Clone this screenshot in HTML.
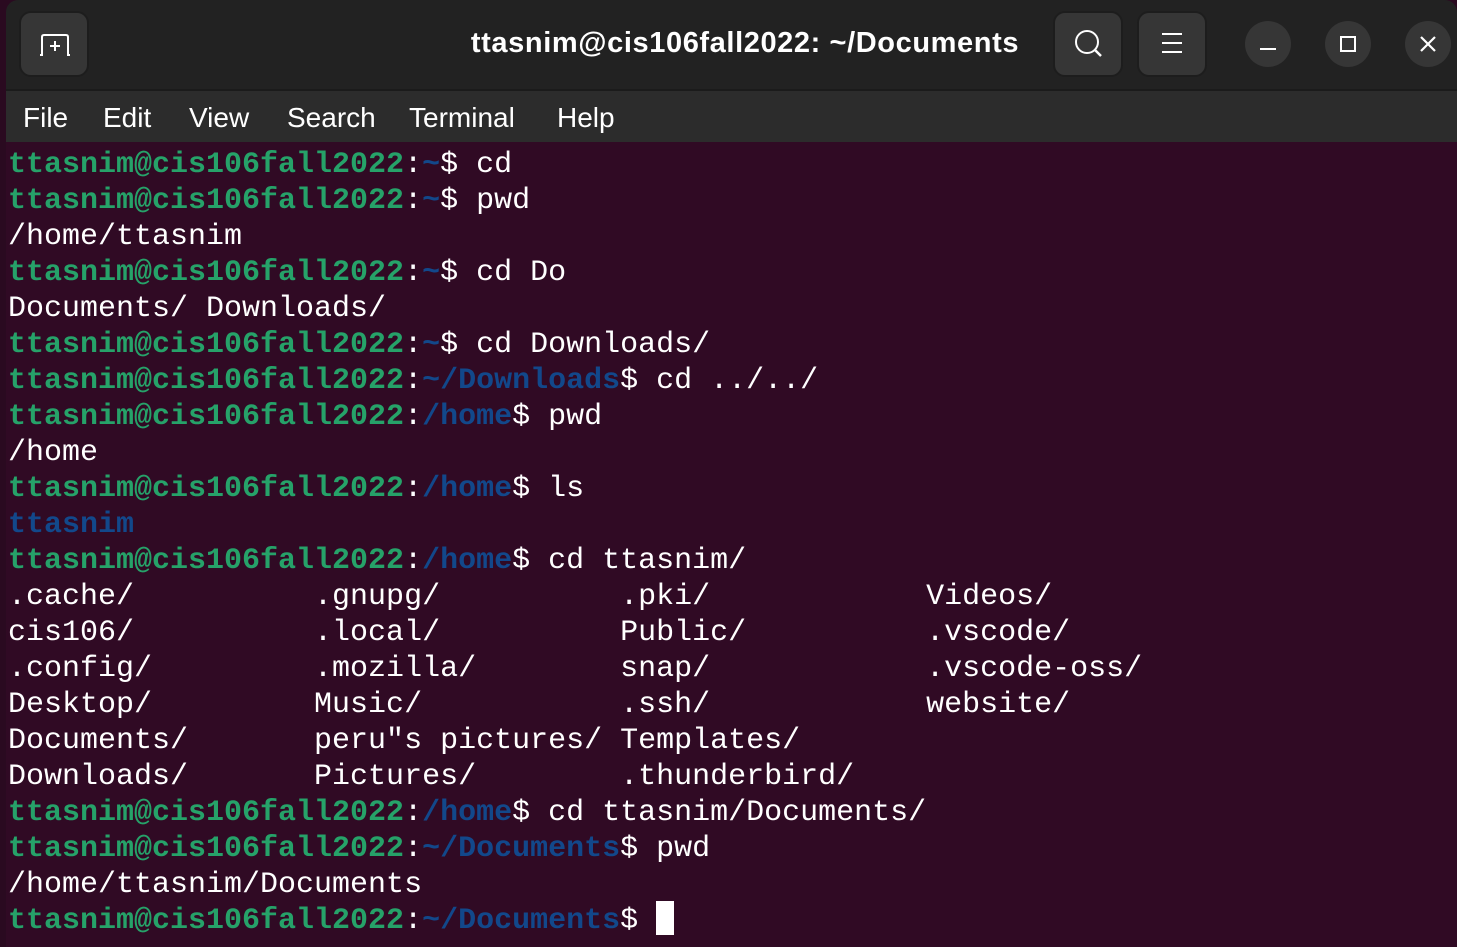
<!DOCTYPE html>
<html><head><meta charset="utf-8"><style>
*{margin:0;padding:0;box-sizing:border-box}
body{width:1457px;height:947px;background:#2a0a20;overflow:hidden;position:relative;font-family:"Liberation Sans",sans-serif}
.win{position:absolute;left:6px;top:0;width:1451px;height:947px;background:#300a24;border-radius:12px 12px 0 0;overflow:hidden}
.title{position:absolute;left:0;top:0;width:100%;height:91px;background:#222;border-bottom:2px solid #1b1b1b}
.btn{position:absolute;top:11px;width:70px;height:66px;background:#363636;border:2px solid #1d1d1d;border-radius:12px}
.circ{position:absolute;top:21px;width:46px;height:46px;border-radius:50%;background:#363636}
.ttl{position:absolute;left:0;width:1478px;top:27px;text-align:center;color:#fff;font-weight:bold;font-size:29px;letter-spacing:0.6px}
.menu{position:absolute;left:0;top:91px;width:100%;height:51px;background:#2c2c2c;color:#fff;font-size:28px}
.menu span{position:absolute;top:11px}
.term{position:absolute;left:2px;top:147px;font-family:"Liberation Mono",monospace;font-size:30px;line-height:36px;color:#fff;white-space:pre}
.g{color:#26a269;font-weight:bold}.b{color:#12488b;font-weight:bold}
.cur{display:inline-block;width:18px;height:34px;background:#fff;vertical-align:top;position:relative;top:-2px}
</style></head><body>
<div class="win">
<div class="title">
 <div class="btn" style="left:13px"><svg width="66" height="62" viewBox="0 0 66 62"><path d="M19 42h2V24q0-2 2-2h22q2 0 2 2v18h2" fill="none" stroke="#fff" stroke-width="2"/><path d="M34 28v10M29 33h10" stroke="#fff" stroke-width="2"/></svg></div>
 <div class="ttl">ttasnim@cis106fall2022: ~/Documents</div>
 <div class="btn" style="left:1047px"><svg width="70" height="66" viewBox="0 0 70 66"><circle cx="32" cy="29" r="11" fill="none" stroke="#fff" stroke-width="2"/><path d="M40 37l6 6" stroke="#fff" stroke-width="2.5"/></svg></div>
 <div class="btn" style="left:1131px"><svg width="70" height="66" viewBox="0 0 70 66"><path d="M23 21h20M23 30h20M23 39h20" stroke="#fff" stroke-width="2"/></svg></div>
 <div class="circ" style="left:1239px"><svg width="46" height="46"><path d="M15 28h16" stroke="#fff" stroke-width="2"/></svg></div>
 <div class="circ" style="left:1319px"><svg width="46" height="46"><rect x="16" y="16" width="14" height="14" fill="none" stroke="#fff" stroke-width="2"/></svg></div>
 <div class="circ" style="left:1399px"><svg width="46" height="46"><path d="M16 16l14 14M30 16L16 30" stroke="#fff" stroke-width="2.2"/></svg></div>
</div>
<div class="menu"><span style="left:17px">File</span><span style="left:97px">Edit</span><span style="left:183px">View</span><span style="left:281px">Search</span><span style="left:403px">Terminal</span><span style="left:551px">Help</span></div>
<div class="term"><span class="g">ttasnim@cis106fall2022</span>:<span class="b">~</span>$ cd
<span class="g">ttasnim@cis106fall2022</span>:<span class="b">~</span>$ pwd
/home/ttasnim
<span class="g">ttasnim@cis106fall2022</span>:<span class="b">~</span>$ cd Do
Documents/ Downloads/
<span class="g">ttasnim@cis106fall2022</span>:<span class="b">~</span>$ cd Downloads/
<span class="g">ttasnim@cis106fall2022</span>:<span class="b">~/Downloads</span>$ cd ../../
<span class="g">ttasnim@cis106fall2022</span>:<span class="b">/home</span>$ pwd
/home
<span class="g">ttasnim@cis106fall2022</span>:<span class="b">/home</span>$ ls
<span class="b">ttasnim</span>
<span class="g">ttasnim@cis106fall2022</span>:<span class="b">/home</span>$ cd ttasnim/
.cache/          .gnupg/          .pki/            Videos/
cis106/          .local/          Public/          .vscode/
.config/         .mozilla/        snap/            .vscode-oss/
Desktop/         Music/           .ssh/            website/
Documents/       peru"s pictures/ Templates/
Downloads/       Pictures/        .thunderbird/
<span class="g">ttasnim@cis106fall2022</span>:<span class="b">/home</span>$ cd ttasnim/Documents/
<span class="g">ttasnim@cis106fall2022</span>:<span class="b">~/Documents</span>$ pwd
/home/ttasnim/Documents
<span class="g">ttasnim@cis106fall2022</span>:<span class="b">~/Documents</span>$ <span class="cur"></span></div>
</div>
</body></html>
